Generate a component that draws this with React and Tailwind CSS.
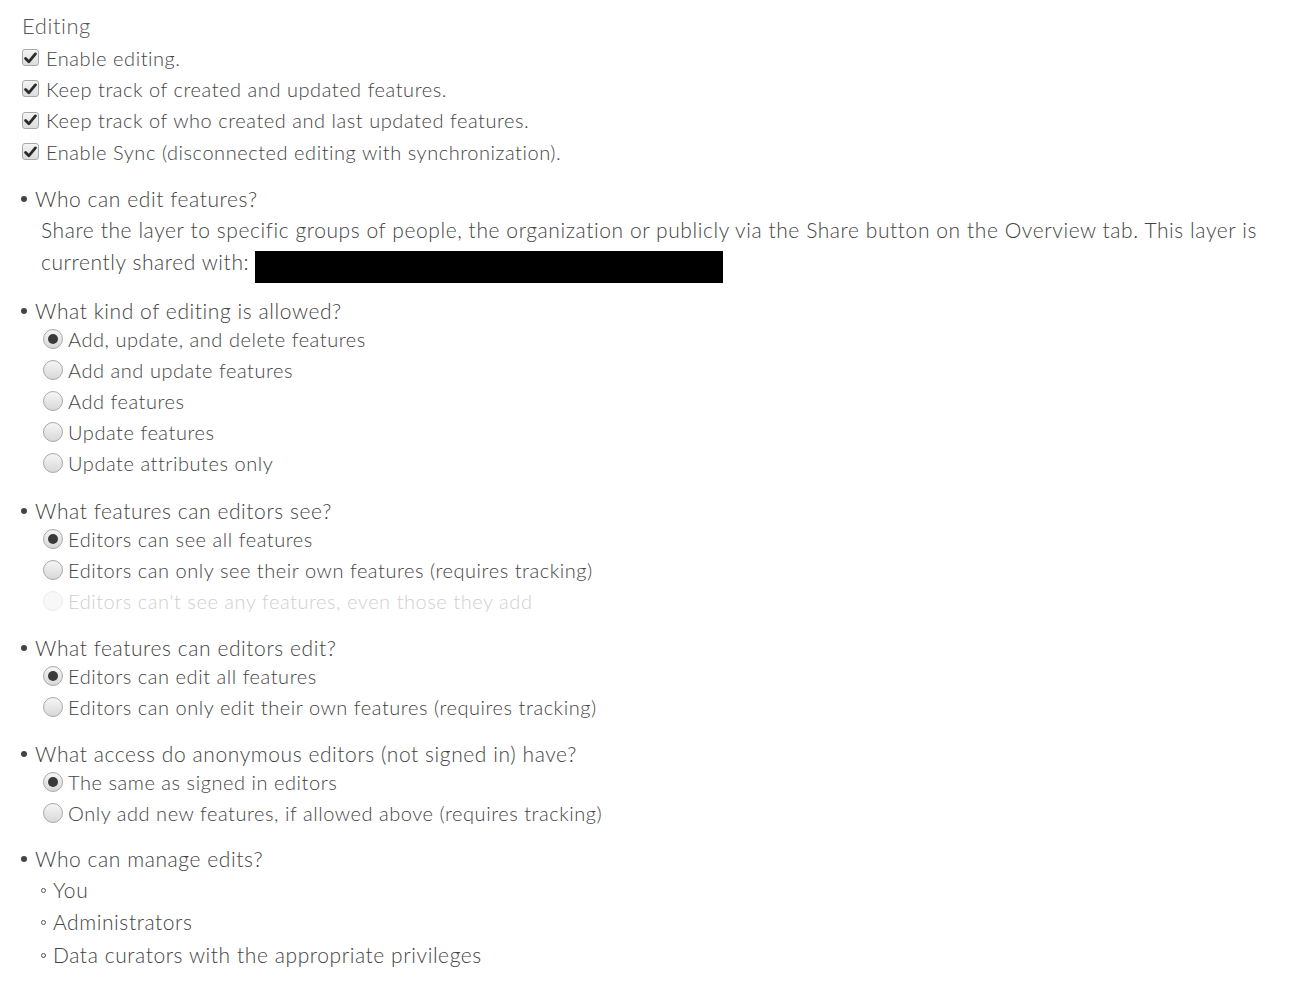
import React from "react";

const font = { fontFamily: '"Lato", "Open Sans", sans-serif' };

function Check() {
  return (
    <span className="inline-flex items-center justify-center w-[17px] h-[17px] rounded-[3px] border border-[#a9a9a9] bg-gradient-to-b from-[#f4f4f4] to-[#dcdcdc] mr-[7px] shrink-0">
      <svg width="13" height="12" viewBox="0 0 13 12">
        <path d="M1.6 6.6 L4.8 9.8 L11.4 1.9" fill="none" stroke="#2b2b2b" strokeWidth="2.8" strokeLinecap="round" strokeLinejoin="round" />
      </svg>
    </span>
  );
}

function Radio({ checked, disabled }) {
  return (
    <span
      className={
        disabled
          ? "inline-flex items-center justify-center w-[20px] h-[20px] rounded-full border border-[#ececec] bg-[#f8f8f8] mr-[5px] shrink-0"
          : "inline-flex items-center justify-center w-[20px] h-[20px] rounded-full border border-[#a8a8a8] bg-gradient-to-b from-[#f6f6f6] to-[#d8d8d8] mr-[5px] shrink-0"
      }
    >
      {checked && <span className="w-[10px] h-[10px] rounded-full bg-[#3a3a3a]" />}
    </span>
  );
}

function CheckRow({ children }) {
  return (
    <div className="flex items-center h-[31.3px]">
      <Check />
      <span>{children}</span>
    </div>
  );
}

function RadioRow({ children, checked, disabled }) {
  return (
    <div className={"flex items-center h-[31px] pl-[43px] " + (disabled ? "text-[#cfcfcf]" : "")}>
      <Radio checked={checked} disabled={disabled} />
      <span>{children}</span>
    </div>
  );
}

function Header({ children }) {
  return (
    <div className="flex items-center h-[27px] pt-[3px] pl-[21px] text-[21px] tracking-[0.58px]">
      <span className="w-[6px] h-[6px] rounded-full bg-[#444] mr-[8px] shrink-0" />
      <span>{children}</span>
    </div>
  );
}

function Sub({ children }) {
  return (
    <div className="flex items-center h-[32.5px] pl-[41px] text-[21px] tracking-[0.58px]">
      <span className="w-[5px] h-[5px] rounded-full border border-[#555] mr-[7px] mt-[2px] shrink-0" />
      <span>{children}</span>
    </div>
  );
}

export default function App() {
  return (
    <div className="w-[1292px] h-[988px] bg-white text-[#444] text-[20px] tracking-[0.55px] font-light overflow-hidden" style={font}>
      <div className="pl-[22px] pt-[10px]">
        <div className="h-[30px] flex items-center text-[22px] text-[#555]">Editing</div>
        <div className="mt-[2px]">
          <CheckRow>Enable editing.</CheckRow>
          <CheckRow>Keep track of created and updated features.</CheckRow>
          <CheckRow>Keep track of who created and last updated features.</CheckRow>
          <CheckRow>Enable Sync (disconnected editing with synchronization).</CheckRow>
        </div>
      </div>

      <div className="mt-[17px]">
        <Header>Who can edit features?</Header>
        <div className="pl-[41px] pr-[22px] leading-[32px] mt-[3px] text-[21px] tracking-[0.58px]">
          Share the layer to specific groups of people, the organization or publicly via the Share button on the Overview tab. This layer is currently shared with:{" "}
          <span className="inline-block align-top translate-y-[5px] w-[468px] h-[32px] bg-black" />
        </div>
      </div>

      <div className="mt-[18px]">
        <Header>What kind of editing is allowed?</Header>
        <RadioRow checked>Add, update, and delete features</RadioRow>
        <RadioRow>Add and update features</RadioRow>
        <RadioRow>Add features</RadioRow>
        <RadioRow>Update features</RadioRow>
        <RadioRow>Update attributes only</RadioRow>
      </div>

      <div className="mt-[18px]">
        <Header>What features can editors see?</Header>
        <RadioRow checked>Editors can see all features</RadioRow>
        <RadioRow>Editors can only see their own features (requires tracking)</RadioRow>
        <RadioRow disabled>Editors can't see any features, even those they add</RadioRow>
      </div>

      <div className="mt-[17px]">
        <Header>What features can editors edit?</Header>
        <RadioRow checked>Editors can edit all features</RadioRow>
        <RadioRow>Editors can only edit their own features (requires tracking)</RadioRow>
      </div>

      <div className="mt-[17px]">
        <Header>What access do anonymous editors (not signed in) have?</Header>
        <RadioRow checked>The same as signed in editors</RadioRow>
        <RadioRow>Only add new features, if allowed above (requires tracking)</RadioRow>
      </div>

      <div className="mt-[16px]">
        <Header>Who can manage edits?</Header>
        <div className="mt-[2px]">
          <Sub>You</Sub>
          <Sub>Administrators</Sub>
          <Sub>Data curators with the appropriate privileges</Sub>
        </div>
      </div>
    </div>
  );
}
